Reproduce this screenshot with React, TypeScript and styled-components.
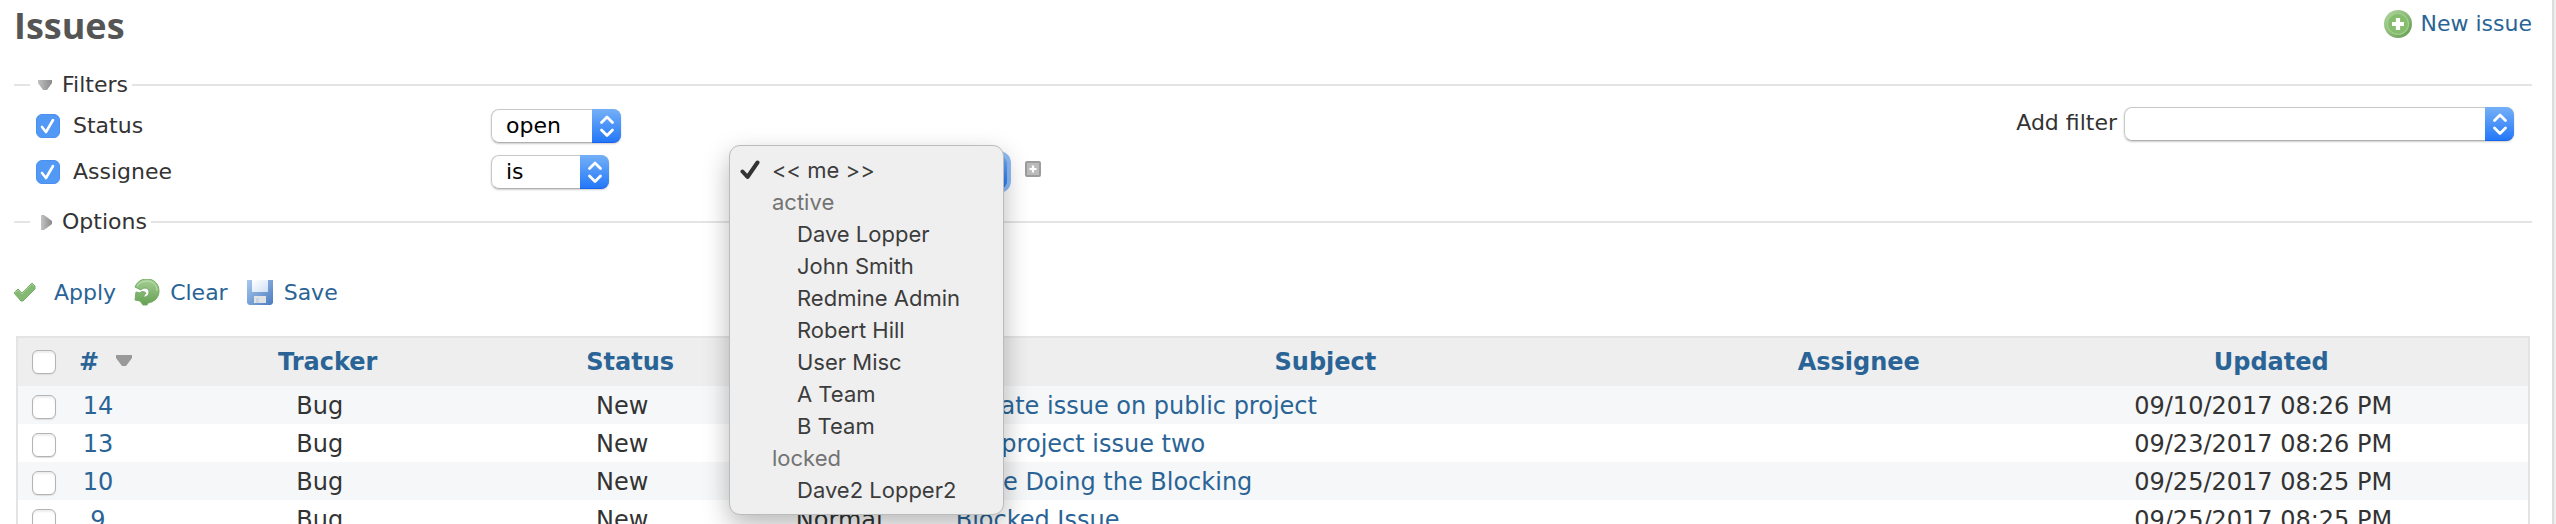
import React from "react";
import styled, { createGlobalStyle } from "styled-components";

const GlobalStyle = createGlobalStyle`
  *, *::before, *::after { box-sizing: border-box; }
  body {
    margin: 0;
    background: #eeeeee;
    color: #333333;
    font: 22px/32px Verdana, "DejaVu Sans", sans-serif;
  }
  svg { display: block; flex: none; }
`;

const Content = styled.main`
  height: 100vh;
  margin-right: 2px;
  padding: 0 20px 0 14px;
  overflow: hidden;
  background: #ffffff;
  border-right: 2px solid #dddddd;
`;

const TitleBar = styled.header`
  display: flex;
  align-items: flex-start;
  justify-content: space-between;
  height: 68px;
`;

const Title = styled.h2`
  margin: 0;
  color: #555555;
  font: bold 36px/52px "Trebuchet MS", "Open Sans", sans-serif;
`;

const Link = styled.a<{ $gap?: number }>`
  display: inline-flex;
  align-items: center;
  gap: ${(p) => p.$gap ?? 12}px;
  color: #2a6496;
  text-decoration: none;
`;

const NewIssue = styled(Link)`
  padding-top: 8px;
`;

const Section = styled.fieldset`
  margin: 0;
  padding: 0;
  min-width: 0;
  border: 0;
  border-top: 2px solid #e4e4e4;
`;

const Legend = styled.legend`
  margin-left: 16px;
  padding: 0 4px 0 7px;
`;

const Toggle = styled.button`
  display: flex;
  align-items: center;
  gap: 9px;
  padding: 1px 0 0;
  border: 0;
  background: none;
  color: inherit;
  font: inherit;
`;

const FilterBody = styled.div`
  display: flex;
  justify-content: space-between;
  align-items: flex-start;
  height: 104px;
  padding: 2px 18px 0 22px;
`;

const FilterRow = styled.div`
  display: grid;
  grid-template-columns: 455px 246px auto;
  align-items: center;
  height: 46px;
`;

const CheckLabel = styled.label`
  display: flex;
  align-items: center;
  gap: 13px;
`;

const Check = styled.input.attrs({ type: "checkbox" })`
  appearance: none;
  flex: none;
  display: block;
  width: 24px;
  height: 24px;
  margin: 0;
  border: 1px solid #b4b4b4;
  border-radius: 6px;
  background: #ffffff;
  box-shadow: inset 0 2px 2px #eeeeee, 0 1px 1px #dddddd;
  &:checked {
    border-color: #4a90ee;
    box-shadow: none;
    background: #5298f5
      url("data:image/svg+xml,%3Csvg xmlns='http://www.w3.org/2000/svg' viewBox='0 0 22 22'%3E%3Cpath d='M5 12l4 5 7-12' fill='none' stroke='white' stroke-width='2.6' stroke-linecap='round' stroke-linejoin='round'/%3E%3C/svg%3E");
  }
`;

const SelectBox = styled.span<{ $width: number; $focused?: boolean }>`
  position: relative;
  display: flex;
  width: ${(p) => p.$width}px;
  height: 34px;
  border-radius: 8px;
  box-shadow: ${(p) => (p.$focused ? "0 0 0 4px #8fbcf7" : "0 1px 2px #cccccc")};
`;

const NativeSelect = styled.select`
  appearance: none;
  width: 100%;
  height: 34px;
  margin: 0;
  padding: 0 32px 0 14px;
  border: 1px solid #c8c8c8;
  border-bottom-color: #b0b0b0;
  border-radius: 8px;
  outline: none;
  background: #ffffff;
  color: #000000;
  font: inherit;
`;

const Stepper = styled.span`
  position: absolute;
  top: 0;
  right: 0;
  display: grid;
  place-items: center;
  width: 29px;
  height: 34px;
  border-radius: 0 8px 8px 0;
  background: linear-gradient(#74b0f7, #2478f8);
  border-bottom: 1px solid #1a63ec;
  pointer-events: none;
`;

const AssigneeField = styled.div`
  position: relative;
  display: flex;
  align-items: center;
  gap: 18px;
`;

const Popup = styled.ul`
  position: absolute;
  z-index: 1;
  top: -10px;
  left: -8px;
  width: 275px;
  margin: 0;
  padding: 8px 0;
  border: 1px solid #b8bcbc;
  border-radius: 11px;
  background: #efefef;
  box-shadow: 0 10px 26px rgba(0, 0, 0, 0.28);
  list-style: none;
  color: #3c3c3c;
  font: 22px/32px Inter, sans-serif;
`;

const Option = styled.li<{ $kind: "top" | "group" | "child" }>`
  display: flex;
  align-items: center;
  height: 32px;
  padding-left: ${(p) => (p.$kind === "top" ? 10 : p.$kind === "group" ? 42 : 67)}px;
  gap: 12px;
  color: ${(p) => (p.$kind === "group" ? "#737373" : "inherit")};
`;

const IconButton = styled.button`
  padding: 0 0 6px;
  border: 0;
  background: none;
`;

const AddFilter = styled.div`
  display: flex;
  align-items: center;
  gap: 7px;
  padding-top: 4px;
  label { padding-bottom: 2px; }
`;

const Actions = styled.div`
  display: flex;
  gap: 18px;
  padding: 39px 0 27px;
`;

const Issues = styled.table`
  table-layout: fixed;
  width: calc(100% - 4px);
  margin-left: 2px;
  border: 2px solid #e4e4e4;
  border-spacing: 0;
  font-size: 24px;
  line-height: 34px;
`;

const Col = styled.col<{ $width: string }>`
  width: ${(p) => p.$width};
`;

const Th = styled.th`
  height: 48px;
  padding: 0 8px;
  background: #eeeeee;
`;

const Row = styled.tr`
  background: #ffffff;
  &:nth-child(odd) { background: #f6f7f8; }
`;

const Td = styled.td<{ $left?: boolean }>`
  height: 38px;
  padding: 2px 20px 0 ${(p) => (p.$left ? 8 : 4)}px;
  overflow: hidden;
  white-space: nowrap;
  text-align: ${(p) => (p.$left ? "left" : "center")};
`;

const CheckCell = styled.div`
  display: flex;
  justify-content: center;
`;

const TdCheck = styled.td`
  padding: 4px 0 0;
`;

const Arrows = () => (
  <Stepper>
    <svg width="16" height="24" viewBox="0 0 16 24" fill="none" stroke="#fff" strokeWidth="2.8" strokeLinecap="round" strokeLinejoin="round">
      <path d="M2.500 8.500L8 3l5.500 5.500M2.500 16l5.500 5.500 5.500-5.500" />
    </svg>
  </Stepper>
);

const DownIcon = () => (
  <svg width="16" height="16" viewBox="0 0 16 16">
    <defs>
      <linearGradient id="down" x1="0" x2="1">
        <stop offset="0" stopColor="#c0c0c0" />
        <stop offset="1" stopColor="#8a8a8a" />
      </linearGradient>
    </defs>
    <path d="M1 3h14v3L10 13H6L1 6z" fill="url(#down)" />
  </svg>
);

const RightIcon = () => (
  <svg width="16" height="18" viewBox="0 0 16 18">
    <defs>
      <linearGradient id="right" x1="0" x2="1">
        <stop offset="0" stopColor="#c4c4c4" />
        <stop offset="1" stopColor="#8a8a8a" />
      </linearGradient>
    </defs>
    <path d="M4 2h3l8 6v3l-8 6H4z" fill="url(#right)" />
  </svg>
);

const SortIcon = () => (
  <svg width="18" height="16" viewBox="0 0 18 16">
    <path d="M1 1h16v3L11 12H7L1 4z" fill="#999" />
  </svg>
);

const AddIcon = () => (
  <svg width="30" height="30" viewBox="0 0 30 30">
    <defs>
      <linearGradient id="add" x1="0" y1="0" x2="1" y2="1">
        <stop offset="0" stopColor="#b5d9a2" />
        <stop offset="1" stopColor="#5f9a4e" />
      </linearGradient>
    </defs>
    <circle cx="15" cy="15" r="14" fill="url(#add)" />
    <circle cx="15" cy="15" r="10.5" fill="#86bd6c" stroke="#a3cd90" strokeWidth="1.200" />
    <path d="M15 9v12M9 15h12" stroke="#fff" strokeWidth="4.200" />
  </svg>
);

const ApplyIcon = () => (
  <svg width="24" height="22" viewBox="0 0 24 22">
    <path d="M0 11l4-4 4 4L18 1l3 3v3L9 19H7z" fill="#84b974" stroke="#78ad68" strokeLinejoin="round" />
    <path d="M1 11l3-3 4 4L18 2l2 2" fill="none" stroke="#a6d296" />
  </svg>
);

const ClearIcon = () => (
  <svg width="26" height="28" viewBox="0 0 26 28">
    <defs>
      <linearGradient id="clear" x1="0" y1="0" x2="0" y2="1">
        <stop offset="0" stopColor="#a5cf94" />
        <stop offset="1" stopColor="#64a052" />
      </linearGradient>
    </defs>
    <path d="M1 8C3 3 7 0 13 0c7 0 12 5 12 12 0 6-4 11-11 12l-1 2H9l-3-4-5-1 1-8 4 1c1-2 4-2 6 0l-3 4c4 0 6-2 6-5 0-2-1-4-4-4-2 0-3 1-4 2z" fill="url(#clear)" stroke="#76ab65" strokeLinejoin="round" />
    <path d="M3 7c2-3 6-5 10-5 6 0 10 4 10 10" fill="none" stroke="#bfe0b1" />
  </svg>
);

const SaveIcon = () => (
  <svg width="28" height="26" viewBox="0 0 28 26">
    <defs>
      <linearGradient id="save" x1="0" y1="0" x2="1" y2="1">
        <stop offset="0" stopColor="#a9c8ee" />
        <stop offset="1" stopColor="#4b7cc0" />
      </linearGradient>
      <linearGradient id="label" x1="0" y1="0" x2="1" y2="1">
        <stop offset="0" stopColor="#ffffff" />
        <stop offset="1" stopColor="#cfe1f6" />
      </linearGradient>
    </defs>
    <path d="M1 0h26v23l-2 2H3l-2-2z" fill="url(#save)" />
    <path d="M6 0h16v12H6z" fill="url(#label)" />
    <path d="M8 16h12v7H8z" fill="#dfe3e6" />
    <path d="M10 18h3v5h-3z" fill="#c8d4e2" />
  </svg>
);

const PlusIcon = () => (
  <svg width="16" height="16" viewBox="0 0 16 16">
    <rect x="1" y="1" width="14" height="14" rx="1" fill="#bbb" stroke="#9c9c9c" strokeWidth="2" />
    <path d="M8 4.500v7M4.500 8h7" stroke="#fff" strokeWidth="2.200" />
  </svg>
);

const TickIcon = () => (
  <svg width="20" height="20" viewBox="0 0 20 20">
    <path d="M2.500 11.500L7.500 17L17.500 2.500" fill="none" stroke="#333" strokeWidth="4" strokeLinecap="round" strokeLinejoin="round" />
  </svg>
);

const assignees: { kind: "top" | "group" | "child"; name: string }[] = [
  { kind: "top", name: "<< me >>" },
  { kind: "group", name: "active" },
  { kind: "child", name: "Dave Lopper" },
  { kind: "child", name: "John Smith" },
  { kind: "child", name: "Redmine Admin" },
  { kind: "child", name: "Robert Hill" },
  { kind: "child", name: "User Misc" },
  { kind: "child", name: "A Team" },
  { kind: "child", name: "B Team" },
  { kind: "group", name: "locked" },
  { kind: "child", name: "Dave2 Lopper2" },
];

const issues = [
  { id: 14, subject: "Private issue on public project", updated: "09/10/2017 08:26 PM" },
  { id: 13, subject: "Subproject issue two", updated: "09/23/2017 08:26 PM" },
  { id: 10, subject: "Issue Doing the Blocking", updated: "09/25/2017 08:25 PM" },
  { id: 9, subject: "Blocked Issue", updated: "09/25/2017 08:25 PM" },
];

const columns = ["Tracker", "Status", "Priority", "Subject", "Assignee", "Updated"];
const widths = ["52px", "72px", "14.8%", "9.3%", "8%", "30.1%", "12.4%", "auto"];

export default function App() {
  return (
    <>
      <GlobalStyle />
      <Content>
        <TitleBar>
          <Title>Issues</Title>
          <NewIssue href="#new" $gap={8}>
            <AddIcon />
            New issue
          </NewIssue>
        </TitleBar>

        <Section>
          <Legend>
            <Toggle type="button" aria-expanded="true">
              <DownIcon />
              Filters
            </Toggle>
          </Legend>
          <FilterBody>
            <div>
              <FilterRow>
                <CheckLabel>
                  <Check defaultChecked />
                  Status
                </CheckLabel>
                <SelectBox $width={130}>
                  <NativeSelect aria-label="Status operator">
                    <option>open</option>
                  </NativeSelect>
                  <Arrows />
                </SelectBox>
              </FilterRow>
              <FilterRow>
                <CheckLabel>
                  <Check defaultChecked />
                  Assignee
                </CheckLabel>
                <SelectBox $width={118}>
                  <NativeSelect aria-label="Assignee operator">
                    <option>is</option>
                  </NativeSelect>
                  <Arrows />
                </SelectBox>
                <AssigneeField>
                  <SelectBox $width={270} $focused>
                    <NativeSelect aria-label="Assignee value" />
                    <Arrows />
                  </SelectBox>
                  <IconButton type="button" aria-label="Select several values">
                    <PlusIcon />
                  </IconButton>
                  <Popup role="listbox" aria-label="Assignees">
                    {assignees.map(({ kind, name }) => (
                      <Option
                        key={name}
                        $kind={kind}
                        role={kind === "group" ? "presentation" : "option"}
                        aria-selected={kind === "group" ? undefined : kind === "top"}
                      >
                        {kind === "top" && <TickIcon />}
                        {name}
                      </Option>
                    ))}
                  </Popup>
                </AssigneeField>
              </FilterRow>
            </div>
            <AddFilter>
              <label htmlFor="add-filter">Add filter</label>
              <SelectBox $width={390}>
                <NativeSelect id="add-filter" />
                <Arrows />
              </SelectBox>
            </AddFilter>
          </FilterBody>
        </Section>

        <Section>
          <Legend>
            <Toggle type="button" aria-expanded="false">
              <RightIcon />
              Options
            </Toggle>
          </Legend>
        </Section>

        <Actions>
          <Link href="#apply" $gap={16}>
            <ApplyIcon />
            Apply
          </Link>
          <Link href="#clear" $gap={10}>
            <ClearIcon />
            Clear
          </Link>
          <Link href="#save" $gap={10}>
            <SaveIcon />
            Save
          </Link>
        </Actions>

        <Issues>
          <colgroup>
            {widths.map((w, i) => (
              <Col key={i} $width={w} />
            ))}
          </colgroup>
          <thead>
            <tr>
              <Th>
                <CheckCell>
                  <Check aria-label="Select all issues" />
                </CheckCell>
              </Th>
              <Th>
                <Link href="#sort-id" $gap={16}>
                  # <SortIcon />
                </Link>
              </Th>
              {columns.map((name) => (
                <Th key={name}>
                  <Link href={`#sort-${name}`}>{name}</Link>
                </Th>
              ))}
            </tr>
          </thead>
          <tbody>
            {issues.map((issue) => (
              <Row key={issue.id}>
                <TdCheck>
                  <CheckCell>
                    <Check aria-label={`Select issue ${issue.id}`} />
                  </CheckCell>
                </TdCheck>
                <Td>
                  <Link href={`#${issue.id}`}>{issue.id}</Link>
                </Td>
                <Td>Bug</Td>
                <Td>New</Td>
                <Td>Normal</Td>
                <Td $left>
                  <Link href={`#${issue.id}`}>{issue.subject}</Link>
                </Td>
                <Td />
                <Td>{issue.updated}</Td>
              </Row>
            ))}
          </tbody>
        </Issues>
      </Content>
    </>
  );
}
